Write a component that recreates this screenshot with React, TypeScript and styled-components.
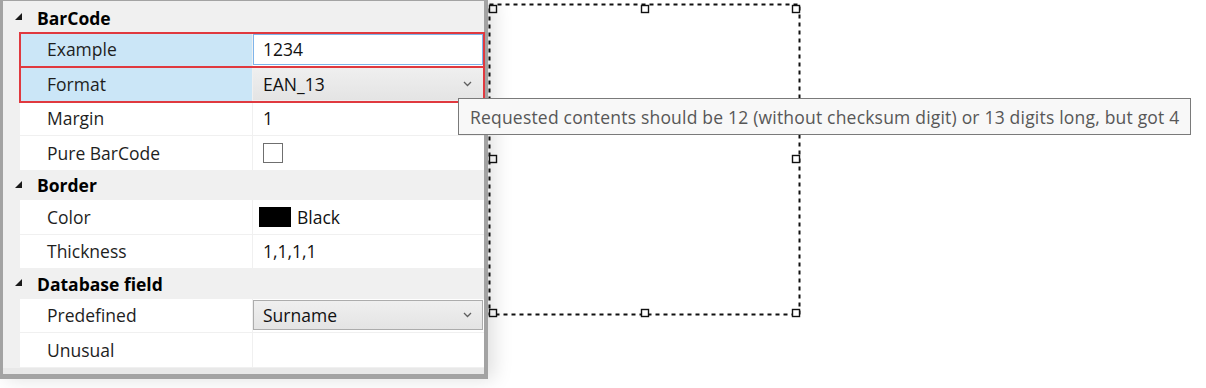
import styled, { createGlobalStyle } from "styled-components";

const GlobalStyle = createGlobalStyle`
  html, body {
    margin: 0;
    padding: 0;
    background: #ffffff;
  }
  body {
    font-family: "Open Sans", "Noto Sans", "Liberation Sans", sans-serif;
    font-size: 17.5px;
    color: #1e1e1e;
  }
`;

const Screen = styled.div`
  position: relative;
  display: flex;
  width: 1206px;
  height: 388px;
  overflow: hidden;
`;

const Panel = styled.div`
  position: relative;
  z-index: 1;
  width: 481px;
  height: 371px;
  padding-top: 2px;
  background: #f0f0f0;
  border-left: 3px solid #a3a3a3;
  border-right: 4px solid #a3a3a3;
  border-top: 1px solid #a3a3a3;
  border-bottom: 5px solid #a3a3a3;
  box-shadow: 6px 0 18px rgba(0, 0, 0, 0.13);
  display: flex;
  flex-direction: column;
`;

const Header = styled.div`
  height: 29.5px;
  display: flex;
  align-items: center;
  gap: 15px;
  padding-left: 12px;
  font-weight: 700;
  color: #000;
`;

const Expander = styled.svg`
  width: 7px;
  height: 7px;
  margin-top: -2px;
`;

const Row = styled.div<{ $selected?: boolean }>`
  height: 34.5px;
  margin-left: 17px;
  display: grid;
  grid-template-columns: 233px 1fr;
  background: #ffffff;
  box-sizing: border-box;
  border-bottom: 1px solid #f0f0f0;
  position: relative;
  ${(p) =>
    p.$selected &&
    `
    outline: 2px solid #e0393f;
    outline-offset: -1px;
    z-index: 1;
  `}
`;

const Name = styled.div<{ $selected?: boolean }>`
  display: flex;
  align-items: center;
  padding-left: 27px;
  border-right: 1px solid #f0f0f0;
  background: ${(p) => (p.$selected ? "#cbe6f7" : "#ffffff")};
  color: #1e1e1e;
`;

const Value = styled.div`
  display: flex;
  align-items: center;
  padding-left: 10px;
  color: #111;
  gap: 6px;
`;

const TextBox = styled.div`
  align-self: stretch;
  margin: 1px 1px 1px -10px;
  padding-left: 9px;
  flex: 1;
  display: flex;
  align-items: center;
  background: #fff;
  border: 1px solid #7eb4ea;
`;

const Combo = styled.div<{ $boxed?: boolean }>`
  align-self: stretch;
  margin: ${(p) => (p.$boxed ? "1px 1px 2px -10px" : "0 1px 0 -10px")};
  padding: 0 10px 0 9px;
  flex: 1;
  display: flex;
  align-items: center;
  justify-content: space-between;
  background: linear-gradient(#efefef, #e4e4e4);
  border: 1px solid ${(p) => (p.$boxed ? "#acacac" : "transparent")};
`;

const Chevron = styled.svg`
  width: 9px;
  height: 6px;
`;

const CheckBox = styled.div`
  width: 18px;
  height: 18px;
  border: 1px solid #6f6f6f;
  background: #fff;
`;

const Swatch = styled.div`
  width: 32px;
  height: 20px;
  margin-left: -4px;
  background: #000;
`;

const Footer = styled.div`
  flex: 1;
  background: #e8e8e8;
`;

const Canvas = styled.div`
  position: relative;
  flex: 1;
`;

const Adorner = styled.svg`
  position: absolute;
  left: 0;
  top: 0;
`;

const Tooltip = styled.div`
  position: absolute;
  z-index: 2;
  left: 458px;
  top: 98px;
  height: 35px;
  padding: 0 11px;
  display: flex;
  align-items: center;
  background: #f8f8f8;
  border: 1px solid #7a7a7a;
  color: #575757;
  letter-spacing: 0.2px;
  white-space: nowrap;
`;

function ChevronDown() {
  return (
    <Chevron viewBox="0 0 9 6">
      <path d="M1 1 L4.5 4.5 L8 1" fill="none" stroke="#5f5f5f" strokeWidth="1.3" />
    </Chevron>
  );
}

function Category({ title }: { title: string }) {
  return (
    <Header>
      <Expander viewBox="0 0 7 7">
        <polygon points="7,0 7,7 0,7" fill="#1a1a1a" />
      </Expander>
      {title}
    </Header>
  );
}

const handles: [number, number][] = [
  [1, 1], [153, 1], [304, 1],
  [1, 151], [304, 151],
  [1, 305], [153, 305], [304, 305],
];

function Selection() {
  return (
    <Adorner width="320" height="325" viewBox="0 0 320 325">
      <rect x="2" y="5" width="310" height="310" fill="none" stroke="#111" strokeWidth="2" strokeDasharray="4 4" transform="translate(-0.5 -0.5)" />
      {handles.map(([x, y]) => (
        <rect key={`${x}-${y}`} x={x + 0.5} y={y + 4.5} width="7" height="7" fill="#fff" stroke="#111" strokeWidth="1.4" />
      ))}
    </Adorner>
  );
}

export default function App() {
  return (
    <>
      <GlobalStyle />
      <Screen>
        <Panel>
          <Category title="BarCode" />
          <Row $selected>
            <Name $selected>Example</Name>
            <Value>
              <TextBox>1234</TextBox>
            </Value>
          </Row>
          <Row $selected>
            <Name $selected>Format</Name>
            <Value>
              <Combo>
                EAN_13
                <ChevronDown />
              </Combo>
            </Value>
          </Row>
          <Row>
            <Name>Margin</Name>
            <Value>1</Value>
          </Row>
          <Row>
            <Name>Pure BarCode</Name>
            <Value>
              <CheckBox />
            </Value>
          </Row>
          <Category title="Border" />
          <Row>
            <Name>Color</Name>
            <Value>
              <Swatch />
              Black
            </Value>
          </Row>
          <Row>
            <Name>Thickness</Name>
            <Value>1,1,1,1</Value>
          </Row>
          <Category title="Database field" />
          <Row>
            <Name>Predefined</Name>
            <Value>
              <Combo $boxed>
                Surname
                <ChevronDown />
              </Combo>
            </Value>
          </Row>
          <Row>
            <Name>Unusual</Name>
            <Value />
          </Row>
          <Footer />
        </Panel>
        <Canvas>
          <Selection />
        </Canvas>
        <Tooltip>
          Requested contents should be 12 (without checksum digit) or 13 digits long, but got 4
        </Tooltip>
      </Screen>
    </>
  );
}
